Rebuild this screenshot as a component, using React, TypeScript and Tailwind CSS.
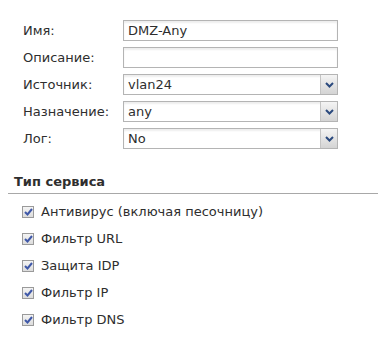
const fields = [
  { label: "Имя:", value: "DMZ-Any", select: false },
  { label: "Описание:", value: "", select: false },
  { label: "Источник:", value: "vlan24", select: true },
  { label: "Назначение:", value: "any", select: true },
  { label: "Лог:", value: "No", select: true },
];

const services = [
  "Антивирус (включая песочницу)",
  "Фильтр URL",
  "Защита IDP",
  "Фильтр IP",
  "Фильтр DNS",
];

const Chevron = () => (
  <svg width="9" height="6" viewBox="0 0 9 6">
    <path d="M1 1 L4.5 4.5 L8 1" fill="none" stroke="#2b4a7e" strokeWidth="2" />
  </svg>
);

const Check = () => (
  <span className="w-[12px] h-[12px] border border-[#9a9a9a] bg-gradient-to-b from-[#f4f4f4] to-[#dcdcdc] flex items-center justify-center">
    <svg width="9" height="8" viewBox="0 0 9 8">
      <path d="M1 4 L3.5 6.5 L8 1" fill="none" stroke="#3f58a8" strokeWidth="2" />
    </svg>
  </span>
);

export default function App() {
  return (
    <div className="w-[386px] h-[352px] bg-white text-[#2e2e2e] text-[13px] font-['DejaVu_Sans',sans-serif]">
      <div className="pt-[20px] pl-[23px] flex flex-col gap-[6px]">
        {fields.map((f) => (
          <div key={f.label} className="flex items-center h-[21px]">
            <span className="w-[100px]">{f.label}</span>
            <div className="w-[215px] h-[21px] border border-[#b4b4b4] bg-white shadow-[inset_0_2px_2px_rgba(0,0,0,0.07)] flex items-center">
              <span className="flex-1 pl-[4px] leading-none">{f.value}</span>
              {f.select && (
                <span className="w-[17px] h-full border-l border-[#c4c4c4] bg-gradient-to-b from-[#f4f4f4] to-[#d4d4d4] flex items-center justify-center">
                  <Chevron />
                </span>
              )}
            </div>
          </div>
        ))}
      </div>

      <div className="mt-[25px] mx-[8px] pl-[6px] pb-[3px] border-b border-[#a8a8a8] font-bold leading-[16px]">
        Тип сервиса
      </div>

      <div className="pt-[4px] pl-[22px] flex flex-col">
        {services.map((s) => (
          <div key={s} className="h-[27px] flex items-center gap-[7px]">
            <Check />
            <span>{s}</span>
          </div>
        ))}
      </div>
    </div>
  );
}
